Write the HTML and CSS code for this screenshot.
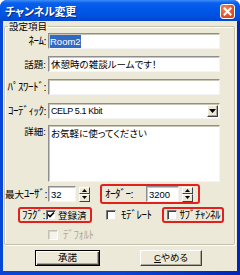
FILE: index.html
```html
<!DOCTYPE html>
<html lang="ja">
<head>
<meta charset="utf-8">
<link rel="stylesheet" href="styles.css">
</head>
<body>
<div class="window">
  <div class="titlebar">
    <span class="title">チャンネル変更</span>
    <span class="close"><svg width="13" height="13" viewBox="0 0 13 13"><path d="M3.5 3.5 L9.5 9.5 M9.5 3.5 L3.5 9.5" stroke="#fff" stroke-width="2" stroke-linecap="square"/></svg></span>
  </div>
  <div class="client">
    <fieldset class="group">
      <legend>設定項目</legend>
      <div class="row r-name"><span class="lbl hw">ﾈｰﾑ:</span><span class="field"><span class="sel latin">Room2</span></span></div>
      <div class="row r-topic"><span class="lbl">話題:</span><span class="field">休憩時の雑談ルームです！</span></div>
      <div class="row r-pass"><span class="lbl hw">ﾊﾟｽﾜｰﾄﾞ:</span><span class="field"></span></div>
      <div class="row r-codec"><span class="lbl hw">ｺｰﾃﾞｨｯｸ:</span><span class="field combo"><span class="latin codec">CELP 5.1 Kbit</span><span class="drop"><svg width="7" height="4" viewBox="0 0 7 4"><path d="M0 0 H7 L3.5 4 Z" fill="#000"/></svg></span></span></div>
      <div class="row r-detail"><span class="lbl top">詳細:</span><span class="field area">お気軽に使ってください</span></div>
      <div class="row r-num">
        <span class="lbl"><span>最大</span><span class="hw">ﾕｰｻﾞ:</span></span><span class="field num latin">32</span>
        <span class="spin"><span class="sb"><svg width="5" height="3" viewBox="0 0 5 3"><path d="M0 3 H5 L2.5 0 Z" fill="#000"/></svg></span><span class="sb"><svg width="5" height="3" viewBox="0 0 5 3"><path d="M0 0 H5 L2.5 3 Z" fill="#000"/></svg></span></span>
        <div class="hl order">
          <span class="hw olbl">ｵｰﾀﾞｰ:</span><span class="field num2 latin">3200</span>
          <span class="spin"><span class="sb"><svg width="5" height="3" viewBox="0 0 5 3"><path d="M0 3 H5 L2.5 0 Z" fill="#000"/></svg></span><span class="sb"><svg width="5" height="3" viewBox="0 0 5 3"><path d="M0 0 H5 L2.5 3 Z" fill="#000"/></svg></span></span>
        </div>
      </div>
      <div class="row r-flags">
        <div class="hl flag"><span class="hw">ﾌﾗｸﾞ:</span><span class="cb checked"><svg width="8" height="8" viewBox="0 0 8 8"><path d="M1 3.5 L3 5.5 L7 1.5" stroke="#000" stroke-width="1.6" fill="none"/></svg></span><span class="reg">登録済</span></div>
        <div class="chk mod"><span class="cb"></span><span class="hw">ﾓﾃﾞﾚｰﾄ</span></div>
        <div class="hl sub"><span class="cb"></span><span class="hw">ｻﾌﾞﾁｬﾝﾈﾙ</span></div>
      </div>
      <div class="row r-def"><span class="cb dis"></span><span class="hw dis-t">ﾃﾞﾌｫﾙﾄ</span></div>
    </fieldset>
    <div class="buttons">
      <button class="btn default">承諾</button>
      <button class="btn cancel"><u class="latin">C</u>やめる</button>
    </div>
  </div>
</div>
</body>
</html>
```
FILE: styles.css
```css
html, body {
  margin: 0;
  padding: 0;
  background: #ffffff;
}
body {
  font-family: "Liberation Sans", "Noto Sans CJK JP", sans-serif;
  font-size: 9.5px;
  line-height: 11px;
  color: #000;
  font-feature-settings: "palt";
}
.window {
  width: 240px;
  height: 275px;
  display: flex;
  flex-direction: column;
  background: linear-gradient(90deg, #0846d8 0, #0846d8 50%, #0026b8 100%);
  border-radius: 7px 7px 0 0;
  overflow: hidden;
}
.titlebar {
  height: 21px;
  flex: none;
  display: flex;
  justify-content: space-between;
  align-items: flex-start;
  padding: 0 5px 0 5px;
  background: linear-gradient(180deg, #3d8ff8 0, #0a5fec 3px, #0058e8 9px, #0052e0 16px, #0046cc 21px);
}
.title {
  color: #fff;
  font-family: "Noto Sans CJK JP", sans-serif;
  font-weight: bold;
  font-size: 11px;
  line-height: 12px;
  margin-top: 5px;
  text-shadow: 1px 1px 0 #0a2a7a;
  letter-spacing: -0.3px;
}
.close {
  margin-top: 4px;
  width: 15px;
  height: 15px;
  box-sizing: border-box;
  border: 1px solid #fff;
  border-radius: 3px;
  background: radial-gradient(circle at 35% 30%, #f08a66 0, #e0552e 55%, #c8401c 100%);
  display: flex;
  align-items: center;
  justify-content: center;
}
.client {
  flex: 1;
  margin: 0 3px 4px 3px;
  background: #ece9d8;
  display: flex;
  flex-direction: column;
}
.group {
  margin: 0 0 0 1px;
  padding: 0 0 4px 0;
  width: 231px;
  box-sizing: border-box;
  border: 1px solid #c4c1ae;
  border-radius: 2px;
  box-shadow: inset 1px 1px 0 #fff, 1px 1px 0 #fff;
  min-width: 0;
}
.group legend {
  padding: 0 1px;
  margin-left: 3px;
  line-height: 10px;
  font-family: "Noto Sans CJK JP", sans-serif;
  font-size: 9.5px;
}
.row {
  display: flex;
  align-items: center;
}
.lbl {
  width: 41px;
  flex: none;
  text-align: right;
  margin-right: 2px;
  white-space: nowrap;
}
.lbl.top { align-self: flex-start; margin-top: 1px; }
.hw { font-size: 11px; letter-spacing: -0.5px; white-space: nowrap; }
.latin { font-family: "Liberation Sans", sans-serif; }
.field {
  width: 172px;
  height: 16px;
  flex: none;
  box-sizing: border-box;
  background: #fff;
  border: 1px solid;
  border-color: #8e8e8e #f4f4f4 #f4f4f4 #8e8e8e;
  box-shadow: inset 1px 1px 0 #c9c6b8;
  padding-left: 2px;
  display: flex;
  align-items: center;
  white-space: nowrap;
  overflow: hidden;
}
.sel {
  background: #316ac5;
  color: #fff;
  padding: 1px 0;
  margin-left: -1px;
  font-size: 9.5px;
}
.r-name { margin-top: 2px; }
.r-topic { margin-top: 7px; }
.r-pass { margin-top: 7px; }
.r-codec { margin-top: 8px; }
.r-detail { margin-top: 6px; align-items: flex-start; }
.r-num { margin-top: 2px; height: 20px; }
.r-flags { margin-top: 3px; height: 16px; }
.r-def { margin-top: 7px; height: 10px; }
.combo { justify-content: space-between; padding-right: 1px; }
.codec { font-size: 9px; letter-spacing: -0.4px; }
.drop {
  width: 11px;
  height: 12px;
  box-sizing: border-box;
  background: #ece9d8;
  border: 1px solid;
  border-color: #fff #404040 #404040 #fff;
  box-shadow: inset -1px -1px 0 #aca899;
  display: flex;
  align-items: center;
  justify-content: center;
}
.area {
  height: 57px;
  align-items: flex-start;
  padding-top: 2px;
}
.num { width: 28px; font-size: 9.5px; }
.num2 { width: 33px; font-size: 9.5px; margin-left: 0; }
.spin {
  width: 11px;
  height: 15px;
  display: flex;
  flex-direction: column;
  margin-left: 3px;
  flex: none;
}
.sb {
  flex: 1;
  box-sizing: border-box;
  background: #ece9d8;
  border: 1px solid;
  border-color: #fff #404040 #404040 #fff;
  display: flex;
  align-items: center;
  justify-content: center;
}
.hl {
  border: 2px solid #e3201b;
  border-radius: 3px;
  box-sizing: border-box;
  display: flex;
  align-items: center;
  flex: none;
  white-space: nowrap;
}
.order {
  width: 100px;
  height: 20px;
  margin-left: 10px;
  padding-left: 3px;
}
.olbl { width: 41px; }
.flag {
  width: 74px;
  height: 16px;
  margin-left: 13px;
  padding-left: 2px;
}
.flag .cb { margin-left: 1px; margin-right: 2px; }
.reg { white-space: nowrap; }
.chk { display: flex; align-items: center; }
.mod { margin-left: 14px; }
.mod .cb, .r-def .cb { margin-right: 5px; }
.sub .cb { margin-right: 3px; }
.sub {
  width: 62px;
  height: 16px;
  margin-left: 10px;
  padding-left: 3px;
}
.cb {
  width: 10px;
  height: 10px;
  box-sizing: border-box;
  background: #fff;
  border: 1px solid;
  border-color: #7a7a7a #e8e8e8 #e8e8e8 #7a7a7a;
  box-shadow: inset 1px 1px 0 #404040;
  display: inline-flex;
  align-items: center;
  justify-content: center;
  flex: none;
}
.cb.dis {
  margin-left: 43px;
  background: #f4f3ee;
  border-color: #c4c1ae #fff #fff #c4c1ae;
  box-shadow: inset 1px 1px 0 #d8d5c4;
}
.dis-t { color: #aca899; }
.buttons {
  display: flex;
  margin-top: 5px;
  padding-left: 32px;
  gap: 40px;
}
.btn {
  height: 16px;
  box-sizing: border-box;
  padding: 0;
  margin: 0;
  font: inherit;
  font-size: 9.5px;
  line-height: 12px;
  background: #ece9d8;
  border: 1px solid;
  border-color: #fff #404040 #404040 #fff;
  box-shadow: inset -1px -1px 0 #aca899;
  color: #000;
}
.btn.default {
  width: 65px;
  border: 1px solid #000;
  box-shadow: inset 1px 1px 0 #fff, inset -1px -1px 0 #404040, inset -2px -2px 0 #aca899;
}
.btn.cancel { width: 62px; }
```
